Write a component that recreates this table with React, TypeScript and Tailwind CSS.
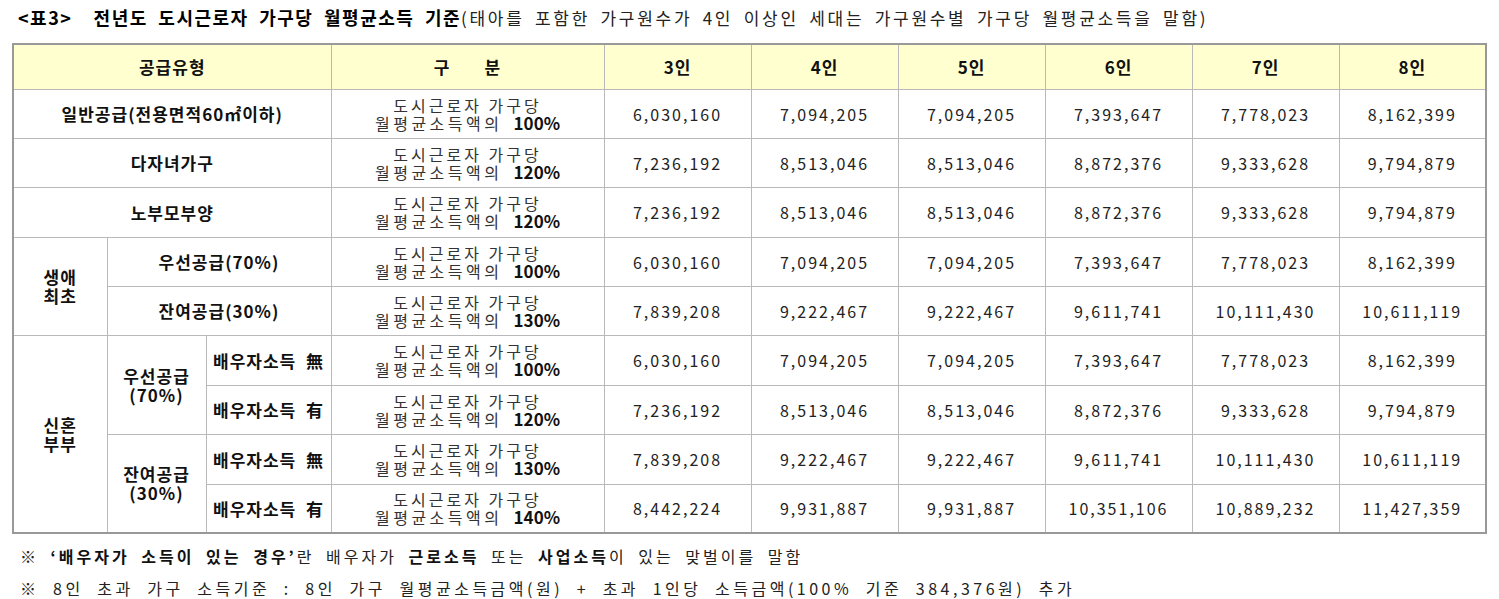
import React from "react";

const KR = "font-['Noto_Sans_CJK_KR','Noto_Sans',sans-serif]";

// incomes per household size: 3인 ~ 8인
const V100 = ["6,030,160", "7,094,205", "7,094,205", "7,393,647", "7,778,023", "8,162,399"];
const V120 = ["7,236,192", "8,513,046", "8,513,046", "8,872,376", "9,333,628", "9,794,879"];
const V130 = ["7,839,208", "9,222,467", "9,222,467", "9,611,741", "10,111,430", "10,611,119"];
const V140 = ["8,442,224", "9,931,887", "9,931,887", "10,351,106", "10,889,232", "11,427,359"];

const td = "border border-[#b9b9b9] text-center align-middle";
const label = `${td} font-bold text-[17px] leading-[19px] text-[#111] tracking-[1px]`;

function Ratio({ pct }: { pct: string }) {
  return (
    <td className={`${td} text-[#333] text-[16px] leading-[18px]`}>
      <div className="tracking-[3px]">도시근로자 가구당</div>
      <div>
        <span className="tracking-[3.5px] [word-spacing:4px]">월평균소득액의 </span>
        <span className="font-bold text-[17px] text-[#111] tracking-[0px]">{pct}</span>
      </div>
    </td>
  );
}

function Nums({ v }: { v: string[] }) {
  return (
    <>
      {v.map((n, i) => (
        <td key={i} className={`${td} text-[16px] text-[#222] tracking-[2px]`}>
          {n}
        </td>
      ))}
    </>
  );
}

function Spouse({ mark }: { mark: string }) {
  return <td className={`${label} tracking-[0.5px] whitespace-pre`}>{`배우자소득  ${mark}`}</td>;
}

export default function App() {
  return (
    <div className={`${KR} bg-white w-[1499px] h-[599px] overflow-hidden text-black`}>
      <div className="pl-[18px] pt-[6px] h-[43px] leading-[22px] whitespace-pre">
        <span className="font-bold text-[18px] tracking-[1.5px] [word-spacing:5px]">
          {"<표3>  전년도 도시근로자 가구당 월평균소득 기준"}
        </span>
        <span className="text-[17px] tracking-[2.7px] [word-spacing:4px] text-[#222]">
          (태아를 포함한 가구원수가 4인 이상인 세대는 가구원수별 가구당 월평균소득을 말함)
        </span>
      </div>

      <table className="ml-[12px] w-[1473px] table-fixed border-collapse border-2 border-[#999]">
        <colgroup>
          <col className="w-[94px]" />
          <col className="w-[99px]" />
          <col className="w-[125px]" />
          <col className="w-[273px]" />
          <col className="w-[147px]" />
          <col className="w-[147px]" />
          <col className="w-[147px]" />
          <col className="w-[147px]" />
          <col className="w-[147px]" />
          <col className="w-[147px]" />
        </colgroup>
        <thead>
          <tr className="h-[45px] bg-[#ffffcf]">
            <th colSpan={3} className={label}>공급유형</th>
            <th className={label}>
              <span className="mr-[34px]">구</span>분
            </th>
            {["3인", "4인", "5인", "6인", "7인", "8인"].map((h) => (
              <th key={h} className={label}>{h}</th>
            ))}
          </tr>
        </thead>
        <tbody>
          <tr className="h-[49px]">
            <td colSpan={3} className={`${label} tracking-[0.8px]`}>일반공급(전용면적60㎡이하)</td>
            <Ratio pct="100%" />
            <Nums v={V100} />
          </tr>
          <tr className="h-[49px]">
            <td colSpan={3} className={`${label} tracking-[1.7px]`}>다자녀가구</td>
            <Ratio pct="120%" />
            <Nums v={V120} />
          </tr>
          <tr className="h-[50px]">
            <td colSpan={3} className={`${label} tracking-[1.7px]`}>노부모부양</td>
            <Ratio pct="120%" />
            <Nums v={V120} />
          </tr>
          <tr className="h-[49px]">
            <td rowSpan={2} className={label}>생애<br />최초</td>
            <td colSpan={2} className={label}>우선공급(70%)</td>
            <Ratio pct="100%" />
            <Nums v={V100} />
          </tr>
          <tr className="h-[49px]">
            <td colSpan={2} className={label}>잔여공급(30%)</td>
            <Ratio pct="130%" />
            <Nums v={V130} />
          </tr>
          <tr className="h-[50px]">
            <td rowSpan={4} className={label}>신혼<br />부부</td>
            <td rowSpan={2} className={label}>우선공급<br />(70%)</td>
            <Spouse mark="無" />
            <Ratio pct="100%" />
            <Nums v={V100} />
          </tr>
          <tr className="h-[49px]">
            <Spouse mark="有" />
            <Ratio pct="120%" />
            <Nums v={V120} />
          </tr>
          <tr className="h-[50px]">
            <td rowSpan={2} className={label}>잔여공급<br />(30%)</td>
            <Spouse mark="無" />
            <Ratio pct="130%" />
            <Nums v={V130} />
          </tr>
          <tr className="h-[49px]">
            <Spouse mark="有" />
            <Ratio pct="140%" />
            <Nums v={V140} />
          </tr>
        </tbody>
      </table>

      <div className="pl-[20px] pt-[11px] text-[16px] leading-[22px] text-[#222]">
        <p className="tracking-[3px] [word-spacing:5px]">
          ※ <b className="text-[#111]">‘배우자가 소득이 있는 경우’</b>란 배우자가 <b className="text-[#111]">근로소득</b> 또는{" "}
          <b className="text-[#111]">사업소득</b>이 있는 맞벌이를 말함
        </p>
        <p className="mt-[10px] tracking-[3.5px] [word-spacing:6.5px]">
          ※ 8인 초과 가구 소득기준 : 8인 가구 월평균소득금액(원) + 초과 1인당 소득금액(100% 기준 384,376원) 추가
        </p>
      </div>
    </div>
  );
}
